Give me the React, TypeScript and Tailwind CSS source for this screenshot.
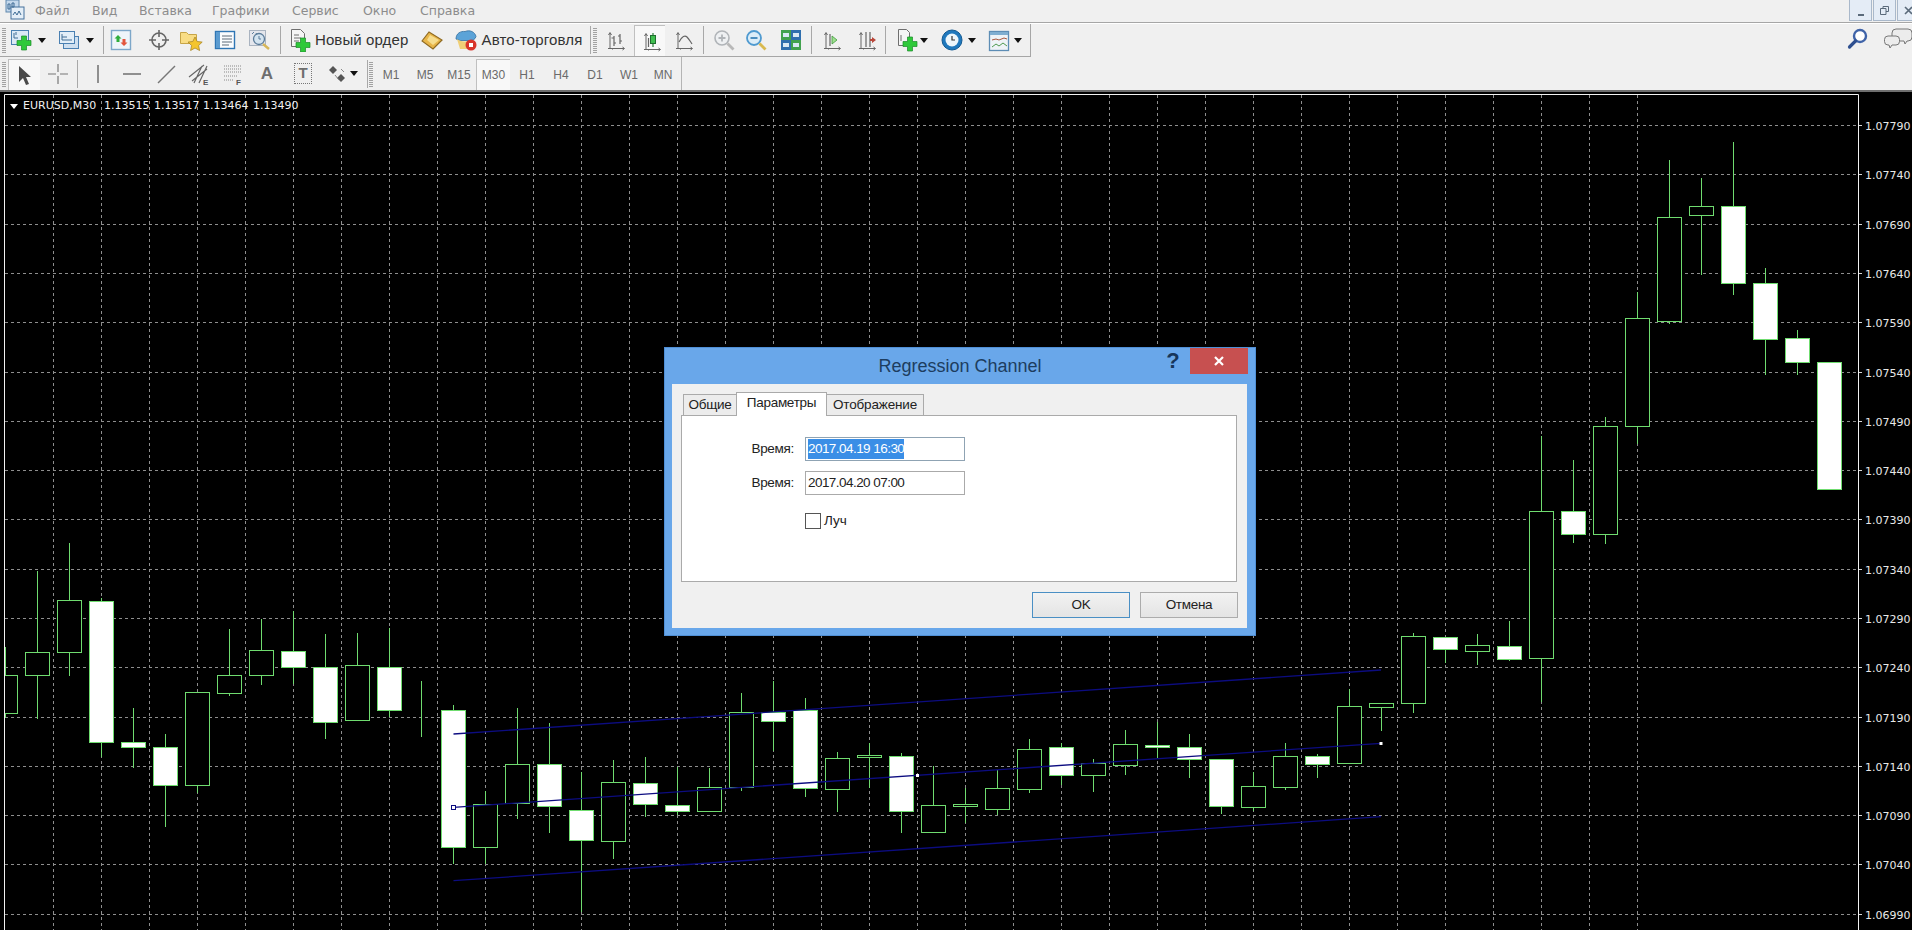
import type { ReactNode } from 'react'

// k, wick top, body top, body bottom, wick bottom, filled
type Candle = [number, number, number, number, number, boolean]

const CANDLES: Candle[] = [
  [0, 647, 675, 713, 718, false], [1, 571, 652, 675, 719, false], [2, 543, 600, 652, 676, false],
  [3, 598, 601, 742, 757, true], [4, 708, 742, 747, 768, true], [5, 734, 747, 785, 827, true],
  [6, 692, 692, 785, 793, false], [7, 629, 675, 693, 696, false], [8, 619, 650, 675, 685, false],
  [9, 611, 651, 667, 684, true], [10, 634, 667, 722, 739, true], [11, 633, 665, 720, 720, false],
  [12, 628, 667, 710, 717, true], [13, 681, 711, 711, 737, false], [14, 705, 710, 847, 864, true],
  [15, 791, 804, 847, 864, false], [16, 708, 764, 803, 819, false], [17, 723, 764, 806, 833, true],
  [18, 772, 810, 840, 912, true], [19, 760, 782, 841, 859, false], [20, 757, 783, 804, 817, true],
  [21, 767, 805, 811, 815, true], [22, 768, 787, 811, 811, false], [23, 693, 712, 787, 791, false],
  [24, 681, 712, 721, 751, true], [25, 698, 710, 788, 797, true], [26, 752, 758, 789, 812, false],
  [27, 743, 755, 757, 788, false], [28, 753, 756, 811, 833, true], [29, 766, 805, 832, 832, false],
  [30, 788, 804, 806, 823, false], [31, 770, 788, 809, 815, false], [32, 739, 749, 789, 793, false],
  [33, 743, 747, 775, 785, true], [34, 759, 763, 775, 792, false], [35, 730, 744, 765, 775, false],
  [36, 722, 745, 747, 758, true], [37, 734, 747, 759, 778, true], [38, 759, 759, 806, 814, true],
  [39, 772, 786, 807, 811, false], [40, 743, 756, 787, 790, false], [41, 754, 756, 764, 778, true],
  [42, 689, 706, 763, 763, false], [43, 703, 703, 707, 731, false], [44, 633, 636, 703, 713, false],
  [45, 637, 637, 649, 663, true], [46, 634, 645, 651, 665, false], [47, 621, 646, 659, 661, true],
  [48, 436, 511, 658, 702, false], [49, 460, 511, 534, 543, true], [50, 417, 426, 534, 544, false],
  [51, 292, 318, 426, 444, false], [52, 160, 217, 321, 324, false], [53, 178, 206, 215, 275, false],
  [54, 142, 206, 283, 295, true], [55, 268, 283, 339, 375, true], [56, 330, 338, 362, 375, true],
  [57, 362, 362, 489, 489, true],
]

const PRICES: [string, number][] = [
  ['1.07790', 125.5], ['1.07740', 174.5], ['1.07690', 224.5], ['1.07640', 273.5], ['1.07590', 322.5],
  ['1.07540', 372.5], ['1.07490', 421.5], ['1.07440', 470.5], ['1.07390', 519.5], ['1.07340', 569.5],
  ['1.07290', 618.5], ['1.07240', 667.5], ['1.07190', 717.5], ['1.07140', 766.5], ['1.07090', 815.5],
  ['1.07040', 864.5], ['1.06990', 914.5],
]

const GRID_X = Array.from({ length: 34 }, (_, i) => 53.5 + 48 * i)

function Icon({ className, children }: { className: string; children: ReactNode }) {
  return (
    <svg viewBox="0 0 24 24" className={`h-6 w-6 shrink-0 ${className}`}>
      {children}
    </svg>
  )
}

function Arrow({ className }: { className: string }) {
  return (
    <svg viewBox="0 0 8 5" className={`h-[5px] w-2 shrink-0 ${className}`}>
      <path d="M0 0h8L4 5z" fill="#111" />
    </svg>
  )
}

function Grip({ className }: { className: string }) {
  return (
    <div className={`h-[26px] w-1 shrink-0 bg-[repeating-linear-gradient(0deg,#a2a2a2_0,#a2a2a2_1px,transparent_1px,transparent_2px)] ${className}`} />
  )
}

function Sep({ className }: { className: string }) {
  return <div className={`h-[28px] w-px shrink-0 bg-[#a8a8a8] ${className}`} />
}

function Plus({ x, y }: { x: number; y: number }) {
  return (
    <path
      transform={`translate(${x} ${y})`}
      d="M-2.5 -7h5v4.5H7v5H2.5V7h-5V2.5H-7v-5h4.5z"
      fill="#2fc93a"
      stroke="#1b8a2a"
      strokeWidth="0.7"
    />
  )
}

function Axes() {
  return <path d="M4 20.5h16M6 20.5V5M4.5 7L6 4.5 7.5 7M18.5 19l2 1.5-2 1.5M8.5 20.5v1" fill="none" stroke="#666" strokeWidth="1" />
}

function TfButton({ label, active }: { label: string; active?: boolean }) {
  return (
    <div
      className={
        active
          ? 'flex h-[31px] w-[34px] shrink-0 items-center justify-center self-end border-l border-t border-[#c0c0c0] bg-[#f8f8f8]'
          : 'flex h-[31px] w-[34px] shrink-0 items-center justify-center self-end'
      }
    >
      {label}
    </div>
  )
}

function Chart() {
  return (
    <svg viewBox="0 92 1912 838" className="block h-[838px] w-[1912px]">
      <defs>
        <clipPath id="plot">
          <rect x="4" y="94" width="1855" height="836" />
        </clipPath>
      </defs>
      <g stroke="#8e8e8e" strokeWidth="1" strokeDasharray="3 3" shapeRendering="crispEdges">
        {GRID_X.map((x) => (
          <line key={x} x1={x} x2={x} y1={95} y2={930} />
        ))}
        {PRICES.map(([label, y]) => (
          <line key={label} x1={5} x2={1859} y1={y} y2={y} />
        ))}
      </g>
      <g clipPath="url(#plot)" stroke="#6fdc6f" strokeWidth="1" shapeRendering="crispEdges">
        {CANDLES.map(([k, wt, bt, bb, wb, filled]) => {
          const x = 5.5 + 32 * k
          return (
            <g key={k}>
              <line x1={x} x2={x} y1={wt} y2={wb} />
              <rect x={x - 12} y={bt + 0.5} width={24} height={bb - bt} fill={filled ? '#fff' : '#000'} />
            </g>
          )
        })}
      </g>
      <g stroke="#0c0c80" strokeWidth="1.3" fill="none">
        <line x1={453.5} y1={734} x2={1381} y2={670} />
        <line x1={453.5} y1={807.3} x2={1381} y2={743.3} />
        <line x1={453.5} y1={880.7} x2={1381} y2={816.7} />
      </g>
      <rect x="451.5" y="805.5" width="4" height="4" fill="#fff" stroke="#0c0c80" />
      <rect x="916" y="774" width="3" height="3" fill="#fff" />
      <rect x="1379.5" y="742" width="3" height="3" fill="#fff" />
      <path d="M4.5 930V94.5H1858.5V930" fill="none" stroke="#f2f2f2" strokeWidth="1" />
      {PRICES.map(([label, y]) => (
        <g key={label}>
          <line x1={1859} x2={1862} y1={y} y2={y} stroke="#d8d8d8" />
          <text x={1865} y={y + 4.5} fill="#e8e8e8" fontSize="11" fontFamily="'DejaVu Sans', sans-serif">
            {label}
          </text>
        </g>
      ))}
    </svg>
  )
}

function Dialog() {
  return (
    <div className="absolute left-[664px] top-[347px] h-[289px] w-[592px] border border-[#4f8fd6] bg-[#69a7ea] font-['Liberation_Sans',sans-serif] text-[13.5px] tracking-[-0.3px] text-[#222]">
      <div className="flex h-[36px]">
        <div className="ml-[214px] flex w-[162px] items-center justify-center whitespace-nowrap text-[18px] tracking-normal text-[#1d3d5f]">
          Regression Channel
        </div>
        <div className="ml-[120px] w-6 pt-[1px] text-center text-[22px] font-bold leading-[24px] tracking-normal text-[#17365a]">?</div>
        <div className="ml-[5px] flex h-[26px] w-[58px] items-center justify-center bg-[#c75050]">
          <svg viewBox="0 0 10 10" className="h-[10px] w-[10px]">
            <path d="M1 1l8 8M9 1l-8 8" stroke="#fff" strokeWidth="2.2" />
          </svg>
        </div>
      </div>
      <div className="ml-[7px] h-[244px] w-[575px] bg-[#f0f0f0] pt-2">
        <div className="ml-[9px] flex h-[23px] items-end">
          <div className="ml-[2px] flex h-[21px] w-[53px] items-center justify-center border-l border-t border-[#aaa] bg-[#ececec]">Общие</div>
          <div className="relative z-10 -mb-px flex h-[24px] w-[91px] items-center justify-center border-x border-t border-[#aaa] bg-white pb-[3px]">Параметры</div>
          <div className="flex h-[21px] w-[97px] items-center justify-center border-r border-t border-[#aaa] bg-[#ececec] tracking-[-0.15px]">Отображение</div>
        </div>
        <div className="ml-[9px] h-[167px] w-[556px] border border-[#aaa] bg-white pt-[21px]">
          <div className="flex items-center">
            <div className="w-[112px] text-right">Время:</div>
            <div className="ml-[11px] flex h-6 w-[160px] items-center border border-[#8fa3b3] px-[2px] tracking-[-0.55px]">
              <span className="bg-[#3a8ee6] text-white">2017.04.19 16:30</span>
            </div>
          </div>
          <div className="mt-[10px] flex items-center">
            <div className="w-[112px] text-right">Время:</div>
            <div className="ml-[11px] flex h-6 w-[160px] items-center border border-[#aaa] px-[2px] tracking-[-0.55px]">2017.04.20 07:00</div>
          </div>
          <div className="mt-[16px] flex items-center">
            <div className="ml-[123px] h-4 w-4 border border-[#555] bg-white" />
            <div className="ml-[3px] tracking-normal">Луч</div>
          </div>
        </div>
        <div className="mt-[10px] flex justify-end pr-[9px]">
          <div className="flex h-[26px] w-[98px] items-center justify-center border border-[#4a8fc4] bg-gradient-to-b from-[#f2f2f2] to-[#e4e4e4]">OK</div>
          <div className="ml-[10px] flex h-[26px] w-[98px] items-center justify-center border border-[#acacac] bg-gradient-to-b from-[#f2f2f2] to-[#e4e4e4]">Отмена</div>
        </div>
      </div>
    </div>
  )
}

export default function App() {
  return (
    <div className="relative h-[930px] w-[1912px] overflow-hidden bg-black font-['DejaVu_Sans',sans-serif]">
      {/* menu bar */}
      <div className="flex h-[23px] border-b border-[#a6a6a6] bg-[#f0f0f0] text-[12.5px] text-[#8c8c8c]">
        <svg viewBox="0 0 20 20" className="ml-[5px] h-5 w-5 shrink-0">
          <rect x="1" y="0" width="13" height="12" fill="#c4d8ec" stroke="#5f87ad" />
          <rect x="6" y="7" width="13" height="12" fill="#e4eef7" stroke="#44709b" />
          <path d="M3 4h2v5H3zM7 3h2v4H7zM8 15l2-3 2 3 2-4 2 4" fill="none" stroke="#3d6b94" />
        </svg>
        <div className="ml-[10px] mt-[2px] w-[35px] whitespace-nowrap">Файл</div>
        <div className="ml-[22px] mt-[2px] w-[24px] whitespace-nowrap">Вид</div>
        <div className="ml-[23px] mt-[2px] w-[52px] whitespace-nowrap">Вставка</div>
        <div className="ml-[21px] mt-[2px] w-[58px] whitespace-nowrap">Графики</div>
        <div className="ml-[22px] mt-[2px] w-[50px] whitespace-nowrap">Сервис</div>
        <div className="ml-[21px] mt-[2px] w-[35px] whitespace-nowrap">Окно</div>
        <div className="ml-[22px] mt-[2px] w-[58px] whitespace-nowrap">Справка</div>
        <div className="ml-auto flex gap-[1px]">
          <div className="flex h-[21px] w-[23px] items-end justify-center border border-t-0 border-[#a9b8ca] bg-[#e4ecf6] pb-[4px]">
            <div className="h-[2px] w-[6px] bg-[#5a6a7a]" />
          </div>
          <div className="flex h-[21px] w-[23px] items-center justify-center border border-t-0 border-[#a9b8ca] bg-[#e4ecf6]">
            <svg viewBox="0 0 9 9" className="h-[9px] w-[9px]">
              <path d="M3 2.5V.5h5.500v5H6M.5 2.500h5.500v6H.5z" fill="none" stroke="#5a6a7a" />
            </svg>
          </div>
          <div className="-mr-[8px] flex h-[21px] w-[23px] items-center justify-center border border-t-0 border-[#a9b8ca] bg-[#e4ecf6]">
            <svg viewBox="0 0 9 9" className="h-[9px] w-[9px]">
              <path d="M1 1l7 7M8 1L1 8" stroke="#5a6a7a" strokeWidth="1.6" />
            </svg>
          </div>
        </div>
      </div>

      {/* main toolbar */}
      <div className="flex h-[34px] border-t border-white bg-[#f0f0f0]">
        <div className="flex h-[33px] w-[1031px] shrink-0 items-center border-b border-r border-[#a6a6a6] text-[14px] text-[#333]">
          <Grip className="ml-[2px]" />
          <Icon className="ml-[4px]">
            <rect x="1.500" y="2.500" width="17" height="14" fill="#dbe9f6" stroke="#4a80b2" />
            <path d="M4 5v5h4M6 4v3" fill="none" stroke="#3f6d95" />
            <Plus x={14} y={15} />
          </Icon>
          <Arrow className="ml-[4px]" />
          <Icon className="ml-[11px]">
            <rect x="6.500" y="8.500" width="15" height="12" fill="#cfe0f0" stroke="#4a80b2" />
            <rect x="2.500" y="3.500" width="15" height="12" fill="#e2eef8" stroke="#4a80b2" />
            <path d="M5 6v6h10M5 9h5" fill="none" stroke="#3f6d95" />
          </Icon>
          <Arrow className="ml-[5px]" />
          <Sep className="ml-[9px]" />
          <Icon className="ml-[5px]">
            <rect x="2.500" y="2.500" width="19" height="19" fill="#eef5fa" stroke="#7da7c9" strokeWidth="1.400" />
            <path d="M9 7l-3.500 3.500h2V14h3v-3.500h2z" fill="#2fae3c" />
            <path d="M15 18l3.500-3.500h-2V11h-3v3.500h-2z" fill="#e2563d" />
          </Icon>
          <Icon className="ml-[14px]">
            <circle cx="12" cy="12" r="7" fill="none" stroke="#666" strokeWidth="1.600" />
            <path d="M12 2v7M12 15v7M2 12h7M15 12h7" stroke="#666" strokeWidth="1.600" />
          </Icon>
          <Icon className="ml-[8px]">
            <path d="M1.500 4.500h6l2 2h8v9h-16z" fill="#f9dd85" stroke="#c7a548" />
            <path d="M16 9l2.200 4.500 5 .6-3.600 3.400 1 5-4.600-2.500-4.400 2.500 1-5-3.600-3.400 4.800-.6z" fill="#f4c52c" stroke="#a9862a" strokeWidth="0.800" />
          </Icon>
          <Icon className="ml-[10px]">
            <rect x="2.500" y="3.500" width="19" height="17" fill="#fafcfe" stroke="#2f76b4" strokeWidth="1.400" />
            <rect x="3" y="4" width="4" height="16" fill="#5b9bd0" />
            <path d="M9 8h10M9 11h10M9 14h10M9 17h7" stroke="#5c6b78" />
          </Icon>
          <Icon className="ml-[10px]">
            <rect x="2.500" y="2.500" width="16" height="15" fill="#e4e6ec" stroke="#a9b3c0" />
            <circle cx="12" cy="11" r="5.500" fill="#d4e4f0" stroke="#5b7c9a" strokeWidth="1.300" />
            <path d="M12 8v3h2M5 6l2-2M9 5l1 2" fill="none" stroke="#5b7c9a" />
            <path d="M16 16l6 5" stroke="#d7b75a" strokeWidth="2.400" />
          </Icon>
          <Sep className="ml-[9px]" />
          <Icon className="ml-[7px]">
            <path d="M3.500 1.500h9l4 4v13h-13z" fill="#f5f5f5" stroke="#6f6f6f" />
            <path d="M6 7h5M6 10h7M6 13h5" stroke="#6f6f6f" />
            <Plus x={15} y={17} />
          </Icon>
          <div className="ml-[3px] w-[94px] whitespace-nowrap font-['Liberation_Sans',sans-serif] text-[15px] tracking-[0.1px]">Новый ордер</div>
          <Icon className="ml-[11px]">
            <path d="M2 13L9 4l13 8-9 9z" fill="#e8b64a" stroke="#8f6a22" strokeWidth="1.200" />
            <path d="M7 12l3-5 9 5-6 5z" fill="#f6dd8e" />
          </Icon>
          <Icon className="ml-[10px]">
            <path d="M2 11c0-6 5-8 9-7.500 5-2 10 .5 11 5-1 3-3 4-6 4H6z" fill="#5ba3d8" stroke="#35709f" strokeWidth="0.800" />
            <path d="M3 11c3 3 10 3 16 1l-2 9H6z" fill="#f0cf76" />
            <circle cx="17" cy="17" r="5.500" fill="#d8342a" />
            <rect x="15" y="15" width="4" height="4" fill="#fff" />
          </Icon>
          <div className="ml-[3.500px] w-[102px] whitespace-nowrap font-['Liberation_Sans',sans-serif] text-[15px] tracking-[0.15px]">Авто-торговля</div>
          <Sep className="ml-[6px]" />
          <Grip className="ml-[2px]" />
          <Icon className="ml-[7px]">
            <Axes />
            <path d="M10 8v10M10 10H7.500M10 15h2M16 6v10M16 8h-2M16 13h2" fill="none" stroke="#666" strokeWidth="1.200" />
          </Icon>
          <div className="ml-[6px] flex h-[31px] w-[31px] shrink-0 items-center justify-center self-end border-l border-t border-[#c0c0c0] bg-[#f8f8f8] pl-1">
            <Icon className="">
              <Axes />
              <path d="M13 4v14" stroke="#2a7d3a" strokeWidth="1.200" />
              <rect x="10.500" y="6.500" width="5" height="8" fill="#3fbf4f" stroke="#1f6d2f" />
              <path d="M8.500 9v9" stroke="#666" strokeWidth="1.200" />
            </Icon>
          </div>
          <Icon className="ml-[7px]">
            <Axes />
            <path d="M7 14c3-6 6-7 8-5s3 4 5 7" fill="none" stroke="#666" strokeWidth="1.200" />
          </Icon>
          <Sep className="ml-[7px]" />
          <Icon className="ml-[8px]">
            <circle cx="10" cy="10" r="7" fill="#eef0f2" stroke="#b0b4b8" strokeWidth="1.600" />
            <path d="M10 6.500v7M6.500 10h7" stroke="#b0b4b8" strokeWidth="1.800" />
            <path d="M15.500 15.500l6 6" stroke="#b8b8b8" strokeWidth="2.800" />
          </Icon>
          <Icon className="ml-[8px]">
            <circle cx="10" cy="10" r="7" fill="#dcedf8" stroke="#4f9ad0" strokeWidth="1.800" />
            <path d="M6.500 10h7" stroke="#3c84b8" strokeWidth="1.800" />
            <path d="M15.500 15.500l6 6" stroke="#d9b94f" strokeWidth="2.800" />
          </Icon>
          <Icon className="ml-[11px]">
            <rect x="2" y="2" width="10" height="10" fill="#42a24e" />
            <rect x="12" y="2" width="10" height="10" fill="#2f6fae" />
            <rect x="2" y="12" width="10" height="10" fill="#2f6fae" />
            <rect x="12" y="12" width="10" height="10" fill="#42a24e" />
            <path d="M4 5h6v4H4zM14 5h6v4h-6zM4 15h6v4H4zM14 15h6v4h-6z" fill="#d9e9f4" />
          </Icon>
          <Sep className="ml-[8px]" />
          <Icon className="ml-[8px]">
            <Axes />
            <path d="M10 6v12" stroke="#666" strokeWidth="1.200" />
            <path d="M12 8l5 4-5 4z" fill="#9fe08f" stroke="#3f9a3c" strokeWidth="0.800" />
          </Icon>
          <Icon className="ml-[11px]">
            <Axes />
            <path d="M11 4v15M15 4v15" stroke="#666" strokeWidth="1.200" />
            <path d="M21 12l-4-3v2h-2v2h2v2z" fill="#b8473a" />
          </Icon>
          <Sep className="ml-[6px]" />
          <Icon className="ml-[9px]">
            <path d="M3.500 1.500h8l3 3v13h-11z" fill="#f5f5f5" stroke="#6f6f6f" />
            <path d="M6 7v6" stroke="#6f6f6f" />
            <Plus x={15} y={16} />
          </Icon>
          <Arrow className="ml-[1px]" />
          <Icon className="ml-[12px]">
            <circle cx="12" cy="12" r="10" fill="#1f78bd" stroke="#135a92" />
            <circle cx="12" cy="12" r="6.500" fill="#eef6fb" />
            <path d="M12 8v4h3" fill="none" stroke="#333" strokeWidth="1.200" />
          </Icon>
          <Arrow className="ml-[4px]" />
          <Icon className="ml-[11px]">
            <rect x="2.500" y="3.500" width="19" height="19" fill="#eef3f7" stroke="#5d8db5" strokeWidth="1.300" />
            <rect x="3" y="4" width="18" height="3" fill="#7faed1" />
            <path d="M5 12l4-1 3 1 5-2 3 1" fill="none" stroke="#a9583f" />
            <path d="M5 19l4-3 3 2 4-3 4 3" fill="none" stroke="#4e9a50" />
          </Icon>
          <Arrow className="ml-[3px]" />
        </div>
        <svg viewBox="0 0 24 24" className="ml-auto mt-[3px] h-6 w-6 shrink-0">
          <circle cx="14" cy="9" r="6" fill="#fff" stroke="#3f63a8" strokeWidth="2.400" />
          <path d="M9.500 14l-6 6" stroke="#2e4f8f" strokeWidth="3.200" strokeLinecap="round" />
        </svg>
        <svg viewBox="0 0 30 24" className="-mr-px ml-[13px] mt-[3px] h-6 w-[30px] shrink-0">
          <path d="M13 2h12a4 4 0 0 1 4 4v4a4 4 0 0 1-4 4h-1l-2 3-1-3h-8a4 4 0 0 1-4-4V6a4 4 0 0 1 4-4z" fill="#ececec" stroke="#777" />
          <path d="M5 9h8a3.500 3.500 0 0 1 3.500 3.500v2A3.500 3.500 0 0 1 13 18H9l-2 3-1-3H5a3.500 3.500 0 0 1-3.500-3.500v-2A3.500 3.500 0 0 1 5 9z" fill="#ececec" stroke="#777" />
        </svg>
      </div>

      {/* drawing toolbar */}
      <div className="flex h-[33px] items-center bg-[#f0f0f0] font-['Liberation_Sans',sans-serif] text-[12px] text-[#6a6a6a]">
        <Grip className="ml-[2px]" />
        <div className="ml-[2px] flex h-[31px] w-8 shrink-0 items-center justify-center self-end border-l border-t border-[#c0c0c0] bg-[#f8f8f8] pr-[2px]">
          <Icon className="">
            <path d="M7 3v16l4-4 3 7 3-1-3-7h5z" fill="#4a4a4a" />
          </Icon>
        </div>
        <Icon className="ml-[6px]">
          <path d="M12 2v8M12 14v8M2 12h8M14 12h8" stroke="#777" strokeWidth="1.200" />
        </Icon>
        <Sep className="ml-[7px]" />
        <Icon className="ml-[8px]">
          <path d="M12 3v18" stroke="#777" strokeWidth="1.600" />
        </Icon>
        <Icon className="ml-[10px]">
          <path d="M3 12h18" stroke="#777" strokeWidth="1.600" />
        </Icon>
        <Icon className="ml-[11px]">
          <path d="M3 21L20 4" stroke="#777" strokeWidth="1.400" />
        </Icon>
        <Icon className="ml-[8px]">
          <path d="M2 15L17 3M5 19L20 7M7 21l8-17M12 21l8-17" stroke="#666" strokeWidth="1.200" />
          <text x="16" y="23" fontSize="8" fontWeight="700" fill="#555" fontFamily="'Liberation Sans', sans-serif">E</text>
        </Icon>
        <Icon className="ml-[10px]">
          <path d="M3 4h17M3 7h17M3 10h17M3 14h13M3 18h10" stroke="#888" strokeDasharray="1 1" />
          <text x="15" y="23" fontSize="8" fontWeight="700" fill="#555" fontFamily="'Liberation Sans', sans-serif">F</text>
        </Icon>
        <div className="ml-[10px] w-6 shrink-0 text-center text-[17px] font-bold text-[#6e6e6e]">A</div>
        <div className="ml-[12px] flex h-6 w-6 shrink-0 items-center justify-center">
          <div className="flex h-[21px] w-[18px] items-center justify-center border border-dotted border-[#777] text-[15px] font-bold text-[#6e6e6e]">T</div>
        </div>
        <Icon className="ml-[10px]">
          <path d="M8 4l4 4-4 4-4-4zM16 12l4 4-4 4-4-4z" fill="#555" />
          <path d="M10 13l4 5M16 7l3 3" stroke="#888" />
        </Icon>
        <Arrow className="ml-[1px]" />
        <Sep className="ml-[9px]" />
        <Grip className="ml-[1px]" />
        <div className="ml-[1px] flex h-[33px] self-stretch">
          <TfButton label="M1" />
          <TfButton label="M5" />
          <TfButton label="M15" />
          <TfButton label="M30" active />
          <TfButton label="H1" />
          <TfButton label="H4" />
          <TfButton label="D1" />
          <TfButton label="W1" />
          <TfButton label="MN" />
        </div>
        <div className="ml-[1px] w-px self-stretch bg-[#b4b4b4]" />
      </div>
      <div className="h-[2px] bg-[#6e6e6e]" />

      {/* chart */}
      <div className="relative">
        <Chart />
        <div className="absolute left-[10px] top-[7px] flex items-center text-[11px] leading-[14px] text-[#f0f0f0]">
          <svg viewBox="0 0 8 5" className="h-[5px] w-2">
            <path d="M0 0h8L4 5z" fill="#fff" />
          </svg>
          <span className="ml-[5px] w-[72px] whitespace-nowrap">EURUSD,M30</span>
          <span className="ml-[9px] w-[45px]">1.13515</span>
          <span className="ml-[5px] w-[44px]">1.13517</span>
          <span className="ml-[5px] w-[45px]">1.13464</span>
          <span className="ml-[5px] w-[45px]">1.13490</span>
        </div>
      </div>

      <Dialog />
    </div>
  )
}
